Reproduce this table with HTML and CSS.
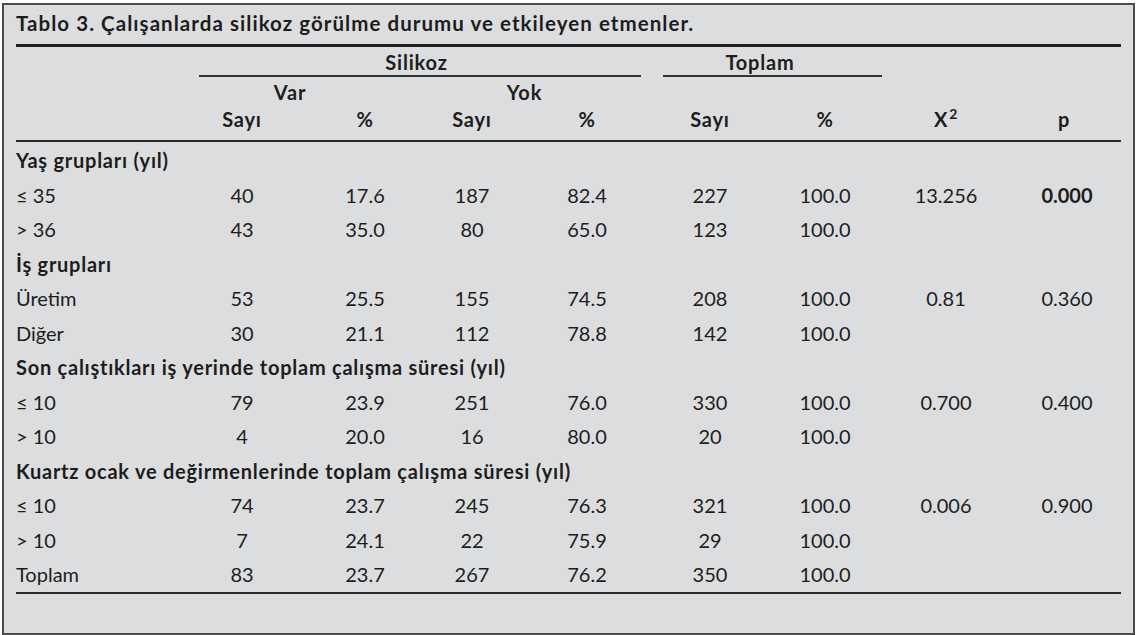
FILE: index.html
```html
<!DOCTYPE html>
<html lang="tr">
<head>
<meta charset="utf-8">
<title>Tablo 3</title>
<link rel="stylesheet" href="styles.css">
</head>
<body>
<div class="frame">
  <h1 class="title">Tablo 3. Çalışanlarda silikoz görülme durumu ve etkileyen etmenler.</h1>
  <div class="grid thead">
    <div class="grp silikoz">Silikoz</div>
    <div class="grp toplam">Toplam</div>
    <div class="sub var">Var</div>
    <div class="sub yok">Yok</div>
    <div class="colh">Sayı</div>
    <div class="colh">%</div>
    <div class="colh">Sayı</div>
    <div class="colh">%</div>
    <div class="colh">Sayı</div>
    <div class="colh">%</div>
    <div class="colh">X<sup>2</sup></div>
    <div class="colh last">p</div>
  </div>
  <div class="grid tbody">
    <div class="section">Yaş grupları (yıl)</div>

    <div class="lbl">≤ 35</div><div>40</div><div>17.6</div><div>187</div><div>82.4</div><div>227</div><div>100.0</div><div>13.256</div><div class="last strong">0.000</div>
    <div class="lbl">&gt; 36</div><div>43</div><div>35.0</div><div>80</div><div>65.0</div><div>123</div><div>100.0</div><div></div><div class="last"></div>

    <div class="section">İş grupları</div>

    <div class="lbl">Üretim</div><div>53</div><div>25.5</div><div>155</div><div>74.5</div><div>208</div><div>100.0</div><div>0.81</div><div class="last">0.360</div>
    <div class="lbl">Diğer</div><div>30</div><div>21.1</div><div>112</div><div>78.8</div><div>142</div><div>100.0</div><div></div><div class="last"></div>

    <div class="section">Son çalıştıkları iş yerinde toplam çalışma süresi (yıl)</div>

    <div class="lbl">≤ 10</div><div>79</div><div>23.9</div><div>251</div><div>76.0</div><div>330</div><div>100.0</div><div>0.700</div><div class="last">0.400</div>
    <div class="lbl">&gt; 10</div><div>4</div><div>20.0</div><div>16</div><div>80.0</div><div>20</div><div>100.0</div><div></div><div class="last"></div>

    <div class="section">Kuartz ocak ve değirmenlerinde toplam çalışma süresi (yıl)</div>

    <div class="lbl">≤ 10</div><div>74</div><div>23.7</div><div>245</div><div>76.3</div><div>321</div><div>100.0</div><div>0.006</div><div class="last">0.900</div>
    <div class="lbl">&gt; 10</div><div>7</div><div>24.1</div><div>22</div><div>75.9</div><div>29</div><div>100.0</div><div></div><div class="last"></div>
    <div class="lbl">Toplam</div><div>83</div><div>23.7</div><div>267</div><div>76.2</div><div>350</div><div>100.0</div><div></div><div class="last"></div>
  </div>
</div>
</body>
</html>
```

FILE: styles.css
```css
html, body {
  margin: 0;
  padding: 0;
  background: #ffffff;
}

body {
  font-family: Lato, "Open Sans", sans-serif;
  color: #1d1d1d;
}

.frame {
  box-sizing: border-box;
  width: 1133px;
  margin: 3px 0 0 2px;
  padding: 6px 12px 39px 12px;
  border: 2px solid #4b4b4b;
  background: #dcdddf;
}

.title {
  margin: 0;
  padding-bottom: 9px;
  font-size: 20.5px;
  line-height: 24px;
  font-weight: 700;
  letter-spacing: 1.05px;
  border-bottom: 3px solid #1f1f1f;
}

.grid {
  display: grid;
  grid-template-columns: 166px 120px 126px 88px 142px 104px 126px 116px 117px;
  font-size: 20px;
  text-align: center;
}

.thead {
  padding-top: 3px;
  padding-bottom: 9px;
  border-bottom: 2px solid #2b2b2b;
  font-weight: 700;
  line-height: 24px;
  letter-spacing: 0.8px;
}

.grp {
  grid-row: 1;
  padding-bottom: 1px;
  border-bottom: 2px solid #333333;
  margin-bottom: 3px;
}

.silikoz {
  grid-column: 2 / 6;
  margin-left: 17px;
  margin-right: 17px;
  padding-right: 7px;
}

.toplam {
  grid-column: 6 / 8;
  margin-left: 5px;
  margin-right: 6px;
  padding-right: 25px;
}

.sub {
  grid-row: 2;
  margin-bottom: 3px;
}

.var {
  grid-column: 2 / 4;
  padding-right: 30px;
}

.yok {
  grid-column: 4 / 6;
  padding-right: 37px;
}

.colh {
  grid-row: 3;
}

.colh:nth-child(5) { grid-column: 2; }
.colh:nth-child(6) { grid-column: 3; }
.colh:nth-child(7) { grid-column: 4; }
.colh:nth-child(8) { grid-column: 5; }
.colh:nth-child(9) { grid-column: 6; }
.colh:nth-child(10) { grid-column: 7; }
.colh:nth-child(11) { grid-column: 8; }
.colh:nth-child(12) { grid-column: 9; }

.colh sup {
  font-size: 14px;
  line-height: 0;
  vertical-align: 8px;
  margin-left: 1px;
}

.last {
  padding-left: 9px;
}

.colh.last {
  padding-left: 3px;
}

.tbody {
  padding-top: 1px;
  border-bottom: 2px solid #2b2b2b;
  line-height: 34.5px;
  font-weight: 400;
}

.section {
  grid-column: 1 / -1;
  text-align: left;
  font-weight: 700;
  letter-spacing: 0.75px;
}

.lbl {
  text-align: left;
}

.strong {
  font-weight: 700;
}
```
